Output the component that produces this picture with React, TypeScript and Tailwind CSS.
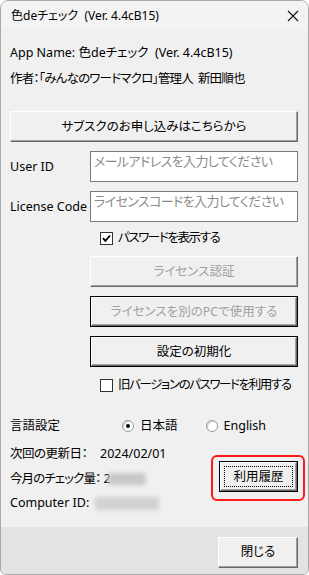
import React from "react";

const font = "[font-family:'Noto_Sans','Noto_Sans_CJK_JP',sans-serif] [font-feature-settings:'palt']";

function Btn({
  children,
  disabled,
  dark,
  focus,
  className = "",
}: {
  children: React.ReactNode;
  disabled?: boolean;
  dark?: boolean;
  focus?: boolean;
  className?: string;
}) {
  const inner = (
    <div
      className={`flex-1 flex items-center justify-center bg-[#f0f0f0] border-t border-l border-t-white border-l-white border-b border-r border-b-[#696969] border-r-[#696969] shadow-[inset_-1px_-1px_0_#a0a0a0] whitespace-nowrap ${
        disabled ? "text-[#a0a0a0]" : "text-[#000]"
      }`}
    >
      {focus ? (
        <div className="flex items-center justify-center w-[calc(100%-6px)] h-[calc(100%-6px)] border border-dotted border-black">
          {children}
        </div>
      ) : (
        children
      )}
    </div>
  );
  return (
    <div className={`flex h-[31px] ${dark ? "border border-black" : ""} ${className}`}>{inner}</div>
  );
}

function Checkbox({ checked, label }: { checked?: boolean; label: string }) {
  return (
    <div className="flex items-center h-[16px] gap-[5px] ml-[90px] whitespace-nowrap">
      <div className="w-[13px] h-[13px] shrink-0 bg-white border border-[#333] flex items-center justify-center">
        {checked && (
          <svg width="9" height="9" viewBox="0 0 9 9">
            <path d="M1 4.2 L3.4 6.8 L8 1.5" stroke="#000" strokeWidth="1.9" fill="none" />
          </svg>
        )}
      </div>
      <span className="tracking-[-1.4px]">{label}</span>
    </div>
  );
}

function Radio({ checked, label }: { checked?: boolean; label: string }) {
  return (
    <div className="flex items-center gap-[6px]">
      <div className="w-[12px] h-[12px] rounded-full bg-white border border-[#9a9a9a] shadow-[inset_1px_1px_0_#cfcfcf] flex items-center justify-center">
        {checked && <div className="w-[4px] h-[4px] rounded-full bg-black" />}
      </div>
      <span>{label}</span>
    </div>
  );
}

function Input({ placeholder }: { placeholder: string }) {
  return (
    <div className="flex-1 h-[31px] bg-white border border-[#7a7a7a] px-[3px] pt-[1px] text-[#8a8a8a] text-[13px] leading-[16px] whitespace-nowrap overflow-hidden tracking-[-0.6px]">
      {placeholder}
    </div>
  );
}

export default function App() {
  return (
    <div
      className={`w-[309px] h-[575px] flex flex-col overflow-hidden rounded-t-[8px] rounded-b-[6px] border border-[#a9a9a9] bg-[#f0f0f0] text-[12.5px] leading-[16px] text-black ${font}`}
    >
      <div className="h-[29px] shrink-0 bg-[#f3f3f3] flex items-center justify-between pl-[10px] pr-[9px]">
        <span className="text-[12px]">色deチェック&nbsp;&nbsp;(Ver. 4.4cB15)</span>
        <svg width="12" height="12" viewBox="0 0 12 12">
          <path d="M1 1 L11 11 M11 1 L1 11" stroke="#111" strokeWidth="1.1" />
        </svg>
      </div>
      <div className="flex-1 flex flex-col px-[9px] pt-[15px] relative">
        <div className="h-[16px]">App Name: 色deチェック&nbsp;&nbsp;(Ver. 4.4cB15)</div>
        <div className="h-[16px] mt-[10px] tracking-[-0.8px]">作者：「みんなのワードマクロ」管理人&nbsp;&nbsp;新田順也</div>
        <Btn className="mt-[24px] mr-[1px]">サブスクのお申し込みはこちらから</Btn>
        <div className="flex items-center mt-[9px] mr-[1px]">
          <div className="w-[80px]">User ID</div>
          <Input placeholder="メールアドレスを入力してください" />
        </div>
        <div className="flex items-center mt-[9px] mr-[1px]">
          <div className="w-[80px] whitespace-nowrap">License Code</div>
          <Input placeholder="ライセンスコードを入力してください" />
        </div>
        <div className="mt-[8px]">
          <Checkbox checked label="パスワードを表示する" />
        </div>
        <Btn disabled className="mt-[10px] ml-[80px] mr-[1px]">ライセンス認証</Btn>
        <Btn disabled dark className="mt-[9px] ml-[80px] mr-[1px]">ライセンスを別のPCで使用する</Btn>
        <Btn dark className="mt-[9px] ml-[80px] mr-[1px]">設定の初期化</Btn>
        <div className="mt-[10px]">
          <Checkbox label="旧バージョンのパスワードを利用する" />
        </div>
        <div className="flex items-center h-[16px] mt-[25px]">
          <div className="w-[112px]">言語設定</div>
          <Radio checked label="日本語" />
          <div className="w-[28px]" />
          <Radio label="English" />
        </div>
        <div className="flex mt-[12px]">
          <div className="flex-1 flex flex-col">
            <div className="h-[16px] flex">
              <span className="w-[90px] tracking-[-0.5px]">次回の更新日：</span>
              <span>2024/02/01</span>
            </div>
            <div className="h-[16px] mt-[9px] flex items-center">
              <span className="tracking-[-0.9px]">今月のチェック量：</span>
              <span className="ml-[3px]">2</span>
              <div className="-ml-[3px] w-[38px] h-[12px] bg-[#c8c8c8] blur-[2px] rounded-[2px]" />
            </div>
            <div className="h-[16px] mt-[8px] flex items-center">
              <span>Computer ID:</span>
              <div className="ml-[6px] w-[64px] h-[13px] bg-[#d2d2d2] blur-[2px] rounded-[2px]" />
            </div>
          </div>
          <div className="relative mt-[15px] mr-[1px] w-[79px] h-[31px]">
            <div className="absolute -left-[8px] -top-[6px] -right-[7px] -bottom-[9px] border-2 border-[#ff1a1a] rounded-[6px]" />
            <Btn dark focus className="w-[79px]">利用履歴</Btn>
          </div>
        </div>
      </div>
      <div className="h-[47px] shrink-0 bg-[#e3e3e3] flex items-center justify-end pr-[10px]">
        <Btn className="w-[80px] mt-[3px]">閉じる</Btn>
      </div>
    </div>
  );
}
